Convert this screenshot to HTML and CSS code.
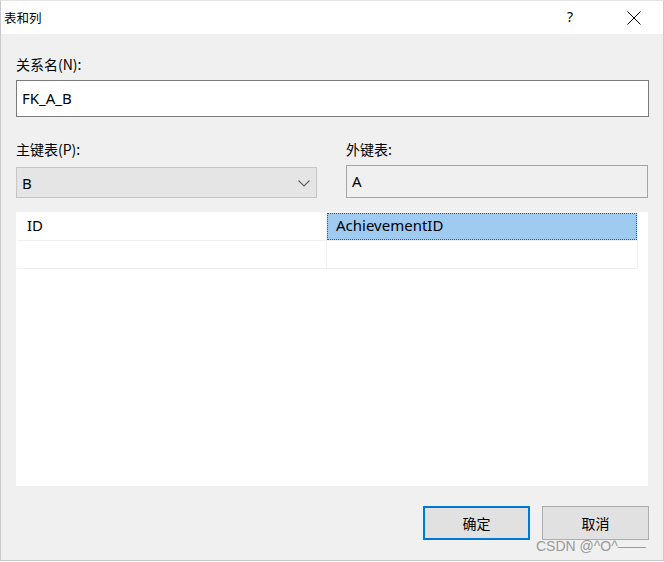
FILE: index.html
```html
<!DOCTYPE html>
<html lang="zh">
<head>
<meta charset="utf-8">
<title>表和列</title>
<link rel="stylesheet" href="styles.css">
</head>
<body>
<div class="window">
  <div class="titlebar">
    <span class="title">表和列</span>
    <span class="tb-help">?</span>
    <span class="tb-close">
      <svg width="14" height="14" viewBox="0 0 14 14"><path d="M0.5 0.5 L13.5 13.5 M13.5 0.5 L0.5 13.5" stroke="#000" stroke-width="1" fill="none"/></svg>
    </span>
  </div>
  <div class="content">
    <div class="label">关系名(N):</div>
    <div class="textbox">FK_A_B</div>
    <div class="two-col">
      <div class="col">
        <div class="label">主键表(P):</div>
        <div class="select">
          <span>B</span>
          <svg width="12" height="7" viewBox="0 0 12 7"><path d="M0.5 0.5 L6 6 L11.5 0.5" stroke="#606060" stroke-width="1.1" fill="none"/></svg>
        </div>
      </div>
      <div class="col">
        <div class="label">外键表:</div>
        <div class="textbox readonly">A</div>
      </div>
    </div>
    <div class="grid">
      <div class="row">
        <div class="cell">ID</div>
        <div class="cell selected">AchievementID</div>
      </div>
      <div class="row">
        <div class="cell"></div>
        <div class="cell"></div>
      </div>
    </div>
    <div class="buttons">
      <button class="btn default">确定</button>
      <button class="btn">取消</button>
    </div>
  </div>
  <div class="watermark">CSDN @^O^——</div>
</div>
</body>
</html>
```

FILE: styles.css
```css
html, body {
  margin: 0;
  padding: 0;
  background: #ffffff;
}
body {
  font-family: "Noto Sans", "Noto Sans CJK SC", sans-serif;
  color: #000;
}
.window {
  position: relative;
  width: 664px;
  height: 561px;
  box-sizing: border-box;
  background: #f0f0f0;
  border-left: 1px solid #c8c8c8;
  border-right: 1px solid #c8c8c8;
  border-bottom: 1px solid #c8c8c8;
  border-top: 1px solid #e4e4e4;
  display: flex;
  flex-direction: column;
}
.titlebar {
  height: 33px;
  background: #fff;
  display: flex;
  align-items: center;
  padding-left: 3px;
  flex: none;
}
.title {
  font-family: "Noto Sans CJK SC", sans-serif;
  font-size: 12.5px;
  flex: 1;
  margin-top: -1px;
}
.tb-help {
  font-family: "Noto Sans", sans-serif;
  font-size: 14px;
  width: 14px;
  margin-right: 46px;
  margin-top: -2px;
}
.tb-close {
  width: 14px;
  height: 14px;
  margin-right: 22px;
  display: flex;
}
.content {
  flex: 1;
  padding: 20px 14px 0 15px;
  display: flex;
  flex-direction: column;
}
.label {
  font-size: 14px;
  line-height: 20px;
  height: 20px;
  margin-bottom: 6px;
  font-family: "Noto Sans CJK SC", sans-serif;
}
.textbox {
  height: 37px;
  box-sizing: border-box;
  background: #fff;
  border: 1px solid #7a7a7a;
  font-size: 15px;
  line-height: 35px;
  padding-left: 5px;
  margin-bottom: 22px;
}
.two-col {
  display: flex;
  gap: 29px;
}
.col {
  display: flex;
  flex-direction: column;
}
.col:first-child {
  width: 301px;
}
.col:first-child .label {
  margin-bottom: 8px;
}
.col:last-child {
  flex: 1;
  margin-right: 1px;
}
.col:last-child .label {
  margin-bottom: 6px;
}
.select {
  height: 31px;
  box-sizing: border-box;
  background: #e5e5e5;
  border: 1px solid #c6c6c6;
  display: flex;
  align-items: center;
  justify-content: space-between;
  padding: 0 6px 0 5px;
  font-size: 15px;
}
.select svg {
  margin-top: 1px;
}
.textbox.readonly {
  height: 33px;
  background: #f0f0f0;
  border-color: #a5a5a5;
  line-height: 30px;
  margin-bottom: 0;
}
.grid {
  margin-top: 14px;
  height: 274px;
  background: #fff;
  display: flex;
  flex-direction: column;
  padding-top: 1px;
  padding-left: 1px;
  box-sizing: border-box;
  margin-right: 1px;
}
.row {
  display: flex;
  width: 620px;
  height: 27px;
  border-bottom: 1px solid #f0f0f0;
  border-right: 1px solid #f0f0f0;
}
.cell {
  box-sizing: border-box;
  height: 27px;
  font-size: 15px;
  line-height: 24px;
  padding-left: 10px;
}
.cell:first-child {
  width: 310px;
  border-right: 1px solid #f0f0f0;
}
.cell:last-child {
  flex: 1;
  padding-left: 8px;
}
.cell.selected {
  background: #9fcbf0;
  border: 1px dotted #505050;
  line-height: 22px;
}
.buttons {
  display: flex;
  justify-content: flex-end;
  gap: 12px;
  margin-top: 20px;
  margin-right: 0;
}
.btn {
  width: 107px;
  height: 34px;
  box-sizing: border-box;
  background: #e1e1e1;
  border: 1px solid #adadad;
  font-family: "Noto Sans CJK SC", sans-serif;
  font-size: 14px;
  color: #000;
  padding: 0;
}
.btn.default {
  border: 2px solid #0078d7;
}
.watermark {
  position: absolute;
  left: 535px;
  top: 537px;
  font-family: "Liberation Sans", sans-serif;
  font-size: 14px;
  color: #9a9a9a;
  white-space: nowrap;
}
```
